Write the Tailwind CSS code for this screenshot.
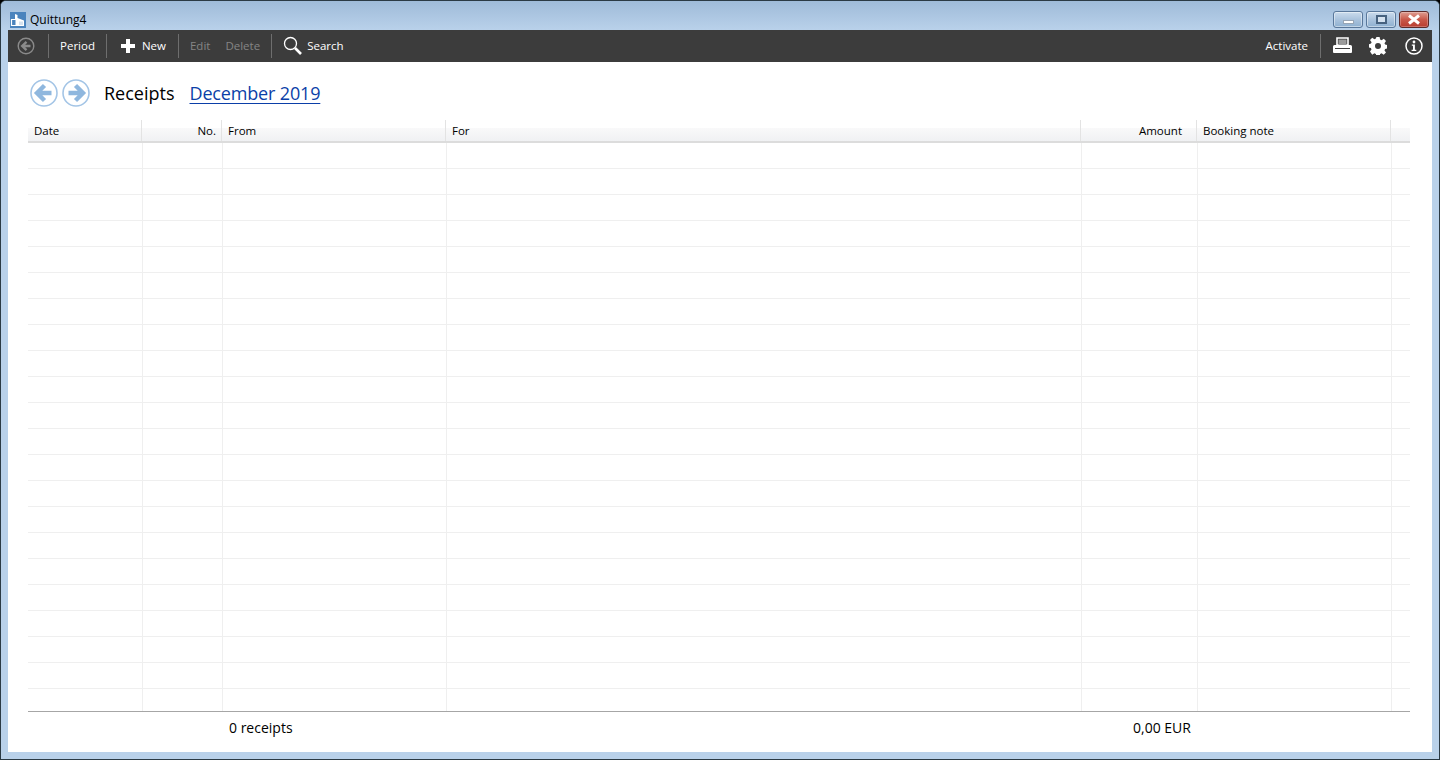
<!DOCTYPE html>
<html lang="en">
<head>
    <meta charset="UTF-8">
    <title>Quittung4</title>
    <script src="https://cdn.jsdelivr.net/npm/@tailwindcss/browser@4"></script>
</head>
<body class="bg-black overflow-hidden">
    <div class="w-[1440px] h-[760px] flex flex-col rounded-t-[6px] border border-[#2b3a45] bg-[#b9d1ea] font-['Open_Sans','Noto_Sans',sans-serif] text-black overflow-hidden">
        <!-- title bar -->
        <div class="h-[29px] shrink-0 flex items-center pl-[9px] pr-[10px] pt-[8px] bg-gradient-to-b from-[#9fbbd9] to-[#b9d1ea]">
            <svg class="w-4 h-4" viewBox="0 0 16 16">
                <rect width="16" height="16" fill="#4a83bd"/>
                <path d="M1.5 7.5h6v6h-6z" fill="none" stroke="#fff" stroke-width="1.2"/>
                <path d="M5 2l2.5 1v3l6.5 2.5V14H5.5V7.5H5z" fill="#fff"/>
                <path d="M9 9.5h4V13H9z" fill="#d5e2ef"/>
            </svg>
            <span class="ml-[4px] text-[12px] leading-none">Quittung4</span>
            <div class="ml-auto flex gap-[3px]">
                <div class="w-[30px] h-[17px] rounded-[3px] border border-[#59779a] shadow-[inset_0_0_0_1px_rgba(255,255,255,0.45)] bg-gradient-to-b from-[#cbdced] via-[#aac3dd] to-[#8fb0d0] flex items-end justify-center pb-[3px]">
                    <div class="w-[11px] h-[4px] bg-white border border-[#6b7f95]/70"></div>
                </div>
                <div class="w-[30px] h-[17px] rounded-[3px] border border-[#59779a] shadow-[inset_0_0_0_1px_rgba(255,255,255,0.45)] bg-gradient-to-b from-[#cbdced] via-[#aac3dd] to-[#8fb0d0] flex items-center justify-center">
                    <div class="w-[11px] h-[9px] bg-[#d5e2ef] border-2 border-[#47627f]"></div>
                </div>
                <div class="w-[30px] h-[17px] rounded-[3px] border border-[#5c2a2a] shadow-[inset_0_0_0_1px_rgba(255,255,255,0.25)] bg-gradient-to-b from-[#dd9d92] via-[#c9584a] to-[#b83c30] flex items-center justify-center">
                    <svg class="w-[14px] h-[11px]" viewBox="0 0 14 11"><path d="M2 1.5l10 8M12 1.5l-10 8" stroke="#fff" stroke-width="3"/></svg>
                </div>
            </div>
        </div>

        <!-- content frame -->
        <div class="flex-1 min-h-0 mx-[7px] flex flex-col">
            <!-- toolbar -->
            <div class="h-[32px] shrink-0 bg-[#3c3c3c] flex items-center pb-[1px] text-[11.5px] text-white">
                <svg class="ml-[9px] w-[18px] h-[18px]" viewBox="0 0 18 18" fill="none" stroke="#8a8a8a">
                    <circle cx="9" cy="9" r="7.8" stroke-width="1.4"/>
                    <path d="M9.5 4.8 5.2 9l4.3 4.2M5.5 9h8" stroke-width="2.4"/>
                </svg>
                <div class="ml-[13px] w-px h-[24px] bg-[#6e6e6e]"></div>
                <span class="ml-[11px]">Period</span>
                <div class="ml-[11px] w-px h-[24px] bg-[#6e6e6e]"></div>
                <svg class="ml-[14px] w-[14px] h-[14px]" viewBox="0 0 14 14"><path d="M5 0h4v5h5v4H9v5H5V9H0V5h5z" fill="#fff"/></svg>
                <span class="ml-[7px]">New</span>
                <div class="ml-[12px] w-px h-[24px] bg-[#6e6e6e]"></div>
                <span class="ml-[11px] text-[#858585]">Edit</span>
                <span class="ml-[15px] text-[#858585]">Delete</span>
                <div class="ml-[11px] w-px h-[24px] bg-[#6e6e6e]"></div>
                <svg class="ml-[11px] w-[20px] h-[20px]" viewBox="0 0 20 20" fill="none" stroke="#fff">
                    <circle cx="7.5" cy="7.5" r="6" stroke-width="1.3"/>
                    <path d="M12 12l6 6" stroke-width="2.6"/>
                </svg>
                <span class="ml-[4px]">Search</span>
                <span class="ml-auto">Activate</span>
                <div class="ml-[12px] w-px h-[24px] bg-[#6e6e6e]"></div>
                <svg class="ml-[12px] w-[19px] h-[18px]" viewBox="0 0 19 18">
                    <path d="M4 1h11v7H4z" fill="none" stroke="#fff" stroke-width="1.6"/>
                    <path d="M5.5 2.5h8V8h-8z" fill="#9a9a9a"/>
                    <path d="M1.5 8h16a1.5 1.5 0 0 1 1.5 1.5V15a1 1 0 0 1-1 1H1a1 1 0 0 1-1-1V9.5A1.5 1.5 0 0 1 1.5 8z" fill="#fff"/>
                    <path d="M2 11.5h15" stroke="#3c3c3c" stroke-width="1"/>
                </svg>
                <svg class="ml-[17px] w-[18px] h-[18px]" viewBox="0 0 18 18" fill="#fff">
                    <path fill-rule="evenodd" d="M7.4 0h3.2l.5 2.6 1.5.6 2.2-1.5 2.2 2.3-1.5 2.2.6 1.4 2.4.6v3.2l-2.4.5-.6 1.5 1.5 2.2-2.3 2.2-2.1-1.5-1.5.6-.5 2.5H7.4l-.5-2.5-1.5-.6-2.2 1.5L1 14.6l1.5-2.2-.6-1.5L0 10.4V7.2l2-.6.6-1.4L1 3l2.2-2.3 2.2 1.5 1.5-.6zM9 6a3 3 0 1 0 0 6 3 3 0 0 0 0-6z"/>
                </svg>
                <svg class="ml-[18px] mr-[9px] w-[18px] h-[18px]" viewBox="0 0 18 18" fill="none">
                    <circle cx="9" cy="9" r="8" stroke="#fff" stroke-width="1.5"/>
                    <circle cx="9" cy="5" r="1.4" fill="#fff"/>
                    <path d="M6.8 7.6h3.1v5.2h1.4v1.2H6.6v-1.2H8V8.8H6.8z" fill="#fff"/>
                </svg>
            </div>

            <!-- white page -->
            <div class="h-[690px] shrink-0 bg-white pl-[20px] pr-[22px] flex flex-col">
                <!-- heading -->
                <div class="h-[58px] shrink-0 flex items-center pl-[2px] pt-[3px]">
                    <svg class="w-[28px] h-[28px]" viewBox="0 0 28 28" fill="none">
                        <circle cx="14" cy="14" r="13" stroke="#a4c5e6" stroke-width="1.6"/>
                        <path d="M14.5 6.5 7 14l7.5 7.5M8 14h13.5" stroke="#8fb7de" stroke-width="4.4"/>
                    </svg>
                    <svg class="ml-[4px] w-[28px] h-[28px]" viewBox="0 0 28 28" fill="none">
                        <circle cx="14" cy="14" r="13" stroke="#a4c5e6" stroke-width="1.6"/>
                        <path d="M13.5 6.5 21 14l-7.5 7.5M20 14H6.5" stroke="#8fb7de" stroke-width="4.4"/>
                    </svg>
                    <span class="ml-[14px] text-[18px] leading-none">Receipts</span>
                    <a href="#" class="ml-[15px] text-[18px] leading-none tracking-[-0.16px] text-[#0b3fa8] underline underline-offset-[3px]">December 2019</a>
                </div>

                <!-- table header -->
                <div class="relative h-[23px] shrink-0 grid grid-cols-[114px_80px_224px_635px_116px_194px_1fr] text-[11.5px] leading-none border-b-2 border-[#dcdcdc]">
                    <div class="absolute inset-x-0 top-[8px] bottom-0 bg-gradient-to-b from-[#f9f9fa] to-[#f0f1f3]"></div>
                    <div class="relative border-r border-[#e3e3e3] pl-[6px] pt-[1px] flex items-center">Date</div>
                    <div class="relative border-r border-[#e3e3e3] pr-[5px] pt-[1px] flex items-center justify-end">No.</div>
                    <div class="relative border-r border-[#e3e3e3] pl-[6px] pt-[1px] flex items-center">From</div>
                    <div class="relative border-r border-[#e3e3e3] pl-[6px] pt-[1px] flex items-center">For</div>
                    <div class="relative border-r border-[#e3e3e3] pr-[14px] pt-[1px] flex items-center justify-end">Amount</div>
                    <div class="relative border-r border-[#e3e3e3] pl-[6px] pt-[1px] flex items-center">Booking note</div>
                    <div class="relative"></div>
                </div>

                <!-- rows -->
                <div id="rows" class="h-[568px] shrink-0 overflow-hidden"></div>

                <!-- totals -->
                <div class="h-[41px] shrink-0 grid grid-cols-[194px_885px_1fr] border-t border-[#a6a6a6] text-[14px] items-center pb-[9px]">
                    <div></div>
                    <div class="pl-[7px]">0 receipts</div>
                    <div class="pl-[26px]">0,00 EUR</div>
                </div>
            </div>
        </div>
    </div>

    <script>
        // the table is empty, only the grid lines show
        const rows = document.getElementById('rows');
        for (let i = 0; i < 22; i++) {
            const row = document.createElement('div');
            row.className = 'h-[26px] grid grid-cols-[115px_80px_224px_635px_116px_194px_1fr] border-b border-[#efefef]';
            for (let c = 0; c < 7; c++) {
                const cell = document.createElement('div');
                if (c < 6) cell.className = 'border-r border-[#efefef]';
                row.appendChild(cell);
            }
            rows.appendChild(row);
        }
    </script>
</body>
</html>
